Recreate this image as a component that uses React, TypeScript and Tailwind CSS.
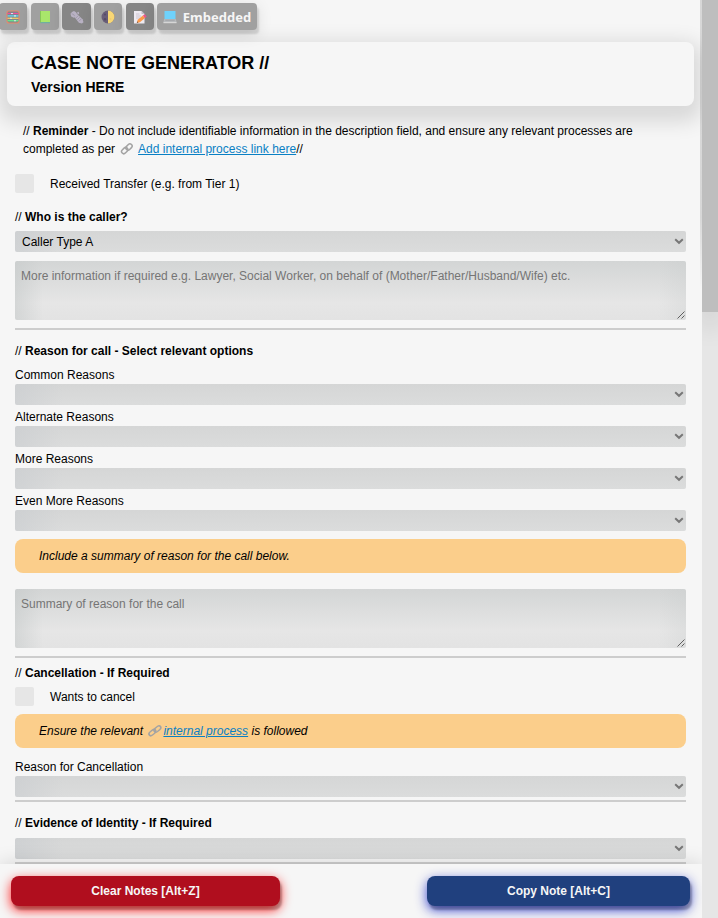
import type { ReactNode } from 'react';

function LinkGlyph({ slanted = false }: { slanted?: boolean }) {
  return (
    <svg viewBox="0 0 14 14" className={`ml-[2px] inline-block size-[14px] align-[-3px] ${slanted ? 'mr-px -skew-x-12' : 'mr-[1px]'}`} fill="none" stroke="#a3a3a3" strokeWidth="1.5">
      <rect x="1.2" y="6.4" width="7" height="4.4" rx="2.2" transform="rotate(-45 4.7 8.6)" />
      <rect x="5.5" y="2.8" width="7" height="4.4" rx="2.2" transform="rotate(-45 9 5)" />
    </svg>
  );
}

function BarsIcon() {
  return (
    <svg viewBox="0 0 14 14" className="size-[14px]">
      <rect x="1" y="1" width="12" height="12" rx="2" fill="#7c8790" stroke="#ea8768" strokeWidth="1.1" />
      <path d="M1.5 3.5h11" stroke="#f04f9c" strokeWidth="1.2" />
      <path d="M1.5 5.9h11" stroke="#62d5ef" strokeWidth="1.3" />
      <path d="M1.5 8.3h11" stroke="#f2cc65" strokeWidth="1.3" />
      <path d="M1.5 10.7h11" stroke="#69e48e" strokeWidth="1.3" />
      <path d="M5 3.5h2M8 5.9h2M4 8.3h2M8 10.7h2" stroke="#dfe4e8" strokeWidth="1.1" />
    </svg>
  );
}

function BookIcon() {
  return (
    <svg viewBox="0 0 12 14" className="h-[14px] w-[12px]">
      <path d="M1 1h10v12H1z" fill="#a9e66b" />
      <path d="M1 1h1v12H1z" fill="#86c757" />
      <path d="M1.5 12h9.5v1.2H1.5z" fill="#6fb0a0" />
    </svg>
  );
}

function BoltIcon() {
  return (
    <svg viewBox="0 0 14 14" className="size-[14px]" fill="#b9b2c4">
      <path d="M.5 3.8 2 2l2-1 2 1.2 1.2 2-1 2.4-2.4 1.2-2.6-1.2z" />
      <path d="m4 6.5 3-2.5 5.6 5.2.9 3-1.6 1.3-3-.8z" />
      <path d="m7 2.5 1.6-.8.6 1.8-1.2 1z" />
      <path d="m5.8 8.1 2.4-2.4M7.4 9.6l2.4-2.4M9 11.2l2.4-2.4" stroke="#918b9b" strokeWidth="0.6" />
      <path d="m1.6 3.8 2 .6 1 1.8" stroke="#918b9b" strokeWidth="0.6" fill="none" />
    </svg>
  );
}

function MoonIcon() {
  return (
    <svg viewBox="0 0 14 14" className="size-[14px]">
      <circle cx="7" cy="7" r="6.5" fill="#695e78" />
      <path d="M7 .5a6.5 6.5 0 0 1 0 13z" fill="#f8d775" />
      <circle cx="4" cy="4.5" r="1" fill="#554b67" />
      <circle cx="4" cy="9.3" r="1.2" fill="#554b67" />
      <circle cx="9.5" cy="9" r="1" fill="#efca70" />
    </svg>
  );
}

function MemoIcon() {
  return (
    <svg viewBox="0 0 14 14" className="size-[14px]">
      <path d="M1 1h7.5l3 3v9.5H1z" fill="#eeeaf1" />
      <path d="M8.5 1v3h3" fill="#c5bdcb" />
      <path d="M3 4h3.5M3 6h5M3 8h4" stroke="#c5bdcb" strokeWidth="0.8" />
      <path d="m3.8 12.9.9-3.1 5.2-4.2 2.1 2.3-5.1 4.3z" fill="#ff9a49" />
      <path d="m9.9 5.6 1.7-1.3 2.1 2.3L12 7.9z" fill="#f0558b" />
      <path d="m3.8 12.9.5-1.6 1.1 1.2z" fill="#6b5b50" />
    </svg>
  );
}

function LaptopIcon() {
  return (
    <svg viewBox="0 0 14 14" className="size-[14px]">
      <path d="M1.5 1h11v8h-11z" fill="#6fd2fb" />
      <path d="M1.3 9h11.4l.9 3H.4z" fill="#b7babd" />
      <path d="M2.3 10.2h9.4" stroke="#96999c" strokeWidth="0.7" />
      <path d="M.4 12h13.2v1.2H.4z" fill="#d6d6d6" />
    </svg>
  );
}

function ToolButton({ children, size, dark = false }: { children: ReactNode; size: string; dark?: boolean }) {
  return (
    <button
      className={`flex h-[27px] shrink-0 items-center justify-center rounded-[4px] shadow-[2px_4px_2px_#00000020,0_4px_16px_#0000001f] ${size} ${dark ? 'bg-[#868686]' : 'bg-[#a0a0a0]'}`}
    >
      {children}
    </button>
  );
}

function Select({ value = '', gap = '' }: { value?: string; gap?: string }) {
  return (
    <div
      className={`flex h-[21px] items-center justify-between rounded-[2px] bg-[linear-gradient(to_right,#cacdd0a0,#cacdd000_48px),linear-gradient(to_bottom,#d5d6d6,#dbdcdc)] pr-[2px] pl-[7px] ${gap}`}
    >
      <span>{value}</span>
      <svg viewBox="0 0 10 7" className="h-[7px] w-[10px]" fill="none" stroke="#777" strokeWidth="2">
        <path d="m1.2 1.2 3.8 3.6 3.8-3.6" />
      </svg>
    </div>
  );
}

function TextArea({ placeholder, gap }: { placeholder: string; gap: string }) {
  return (
    <div
      className={`flex h-[59px] justify-between rounded-[2px] bg-[linear-gradient(to_right,#c6caca90,#c6caca00_28px,#c6caca00_calc(100%-28px),#c6caca40),linear-gradient(to_bottom,#d3d5d5,#e6e6e6_42px,#e3e3e3)] pt-[6px] pl-[6px] text-[#757575] ${gap}`}
    >
      <span>{placeholder}</span>
      <svg viewBox="0 0 8 8" className="mr-px mb-px size-[8px] self-end" stroke="#505050" strokeWidth="0.9">
        <path d="M.5 7.5l7-7M4.5 7.5l3-3" />
      </svg>
    </div>
  );
}

function Heading({ children, gap }: { children: ReactNode; gap: string }) {
  return (
    <h2 className={`h-[18px] ${gap}`}>
      // <b>{children}</b>
    </h2>
  );
}

function Check({ label, gap }: { label: string; gap: string }) {
  return (
    <label className={`flex h-[19px] items-center gap-4 ${gap}`}>
      <span className="size-[19px] rounded-[2px] bg-[#e6e6e6]" />
      <span>{label}</span>
    </label>
  );
}

function Rule({ gap }: { gap: string }) {
  return <div className={`h-[2px] bg-[#cdcdcd] ${gap}`} />;
}

function Note({ children, gap }: { children: ReactNode; gap: string }) {
  return <div className={`h-[34px] rounded-[8px] bg-[#fbce8b] pl-6 leading-[34px] italic ${gap}`}>{children}</div>;
}

const reasons = ['Common Reasons', 'Alternate Reasons', 'More Reasons', 'Even More Reasons'];

export default function App() {
  return (
    <div className="flex h-[918px] w-[718px] overflow-hidden bg-[#f6f6f6] font-['Liberation_Sans',Arial,sans-serif] text-[12px] leading-[18px] text-black">
      <div className="flex w-[702px] shrink-0 flex-col overflow-hidden">
        <main className="h-[864px] overflow-hidden">
          <div className="flex h-[42px] pt-[3px]">
            <ToolButton size="-ml-[1px] w-[28px]"><BarsIcon /></ToolButton>
            <ToolButton size="ml-[4px] w-[28px]"><BookIcon /></ToolButton>
            <ToolButton size="ml-[3px] w-[29px]" dark><BoltIcon /></ToolButton>
            <ToolButton size="ml-[3px] w-[28px]"><MoonIcon /></ToolButton>
            <ToolButton size="ml-[4px] w-[28px]" dark><MemoIcon /></ToolButton>
            <ToolButton size="ml-[3px] w-[100px] gap-[6px] pr-[2px]">
              <LaptopIcon />
              <span className="-mr-[2px] font-['Noto_Sans','Open_Sans',sans-serif] text-[13px] font-bold text-[#f6f6f6]">Embedded</span>
            </ToolButton>
          </div>

          <header className="ml-[7px] h-[64px] w-[687px] rounded-[8px] bg-[#f6f6f6] pt-[9px] pl-6 font-bold shadow-[0_8px_20px_8px_#0000001f]">
            <h1 className="text-[18px] leading-[24px]">CASE NOTE GENERATOR //</h1>
            <p className="text-[14px] leading-[24px]">Version HERE</p>
          </header>

          <div className="px-[15px] pr-[16px]">
            <p className="mt-4 h-[36px] px-2">
              // <b>Reminder</b> - Do not include identifiable information in the description field, and ensure any relevant processes are
              <br />
              completed as per <LinkGlyph />{' '}
              <a className="text-[#0a80c4] underline">Add internal process link here</a>//
            </p>
            <Check label="Received Transfer (e.g. from Tier 1)" gap="mt-4" />
            <Heading gap="mt-[15px]">Who is the caller?</Heading>
            <Select value="Caller Type A" gap="mt-[5px]" />
            <TextArea gap="mt-[9px]" placeholder="More information if required e.g. Lawyer, Social Worker, on behalf of (Mother/Father/Husband/Wife) etc." />
            <Rule gap="mt-2" />

            <Heading gap="mt-3">Reason for call - Select relevant options</Heading>
            <div className="mt-[6px] flex flex-col gap-[3px]">
              {reasons.map((reason) => (
                <div key={reason}>
                  <p>{reason}</p>
                  <Select />
                </div>
              ))}
            </div>
            <Note gap="mt-2">Include a summary of reason for the call below.</Note>
            <TextArea gap="mt-4" placeholder="Summary of reason for the call" />
            <Rule gap="mt-2" />

            <Heading gap="mt-[6px]">Cancellation - If Required</Heading>
            <Check label="Wants to cancel" gap="mt-[5px]" />
            <Note gap="mt-2">
              Ensure the relevant <LinkGlyph slanted />
              <a className="text-[#0a80c4] underline">internal process</a> is followed
            </Note>
            <p className="mt-[10px]">Reason for Cancellation</p>
            <Select />
            <Rule gap="mt-[3px]" />

            <Heading gap="mt-3">Evidence of Identity - If Required</Heading>
            <Select gap="mt-[6px]" />
            <Rule gap="mt-[3px]" />
          </div>
        </main>

        <footer className="relative flex h-[54px] shrink-0 justify-between bg-[#f6f6f6] pt-3 pr-3 pl-[11px] text-[12px] font-bold text-[#f6f6f6] shadow-[0_0_20px_#00000026]">
          <button className="h-[30px] w-[269px] rounded-[8px] bg-[#b00e1e] shadow-[2px_4px_2px_#00000040,0_4px_12px_#ff0000e0]">Clear Notes [Alt+Z]</button>
          <button className="h-[30px] w-[263px] rounded-[8px] bg-[#20407e] shadow-[2px_4px_2px_#00000040,0_4px_12px_#2030c8e0]">Copy Note [Alt+C]</button>
        </footer>
      </div>

      <div className="z-10 -ml-[2px] flex h-full w-[18px] shrink-0">
        <div className="h-[290px] w-[2px] bg-linear-to-b from-[#00000020] from-75% to-transparent" />
        <div className="h-full w-[16px] overflow-hidden bg-[#e6e6e6]">
          <div className="h-[312px] bg-[#bebebe] shadow-[0_16px_24px_#0000001f]" />
        </div>
      </div>
    </div>
  );
}
